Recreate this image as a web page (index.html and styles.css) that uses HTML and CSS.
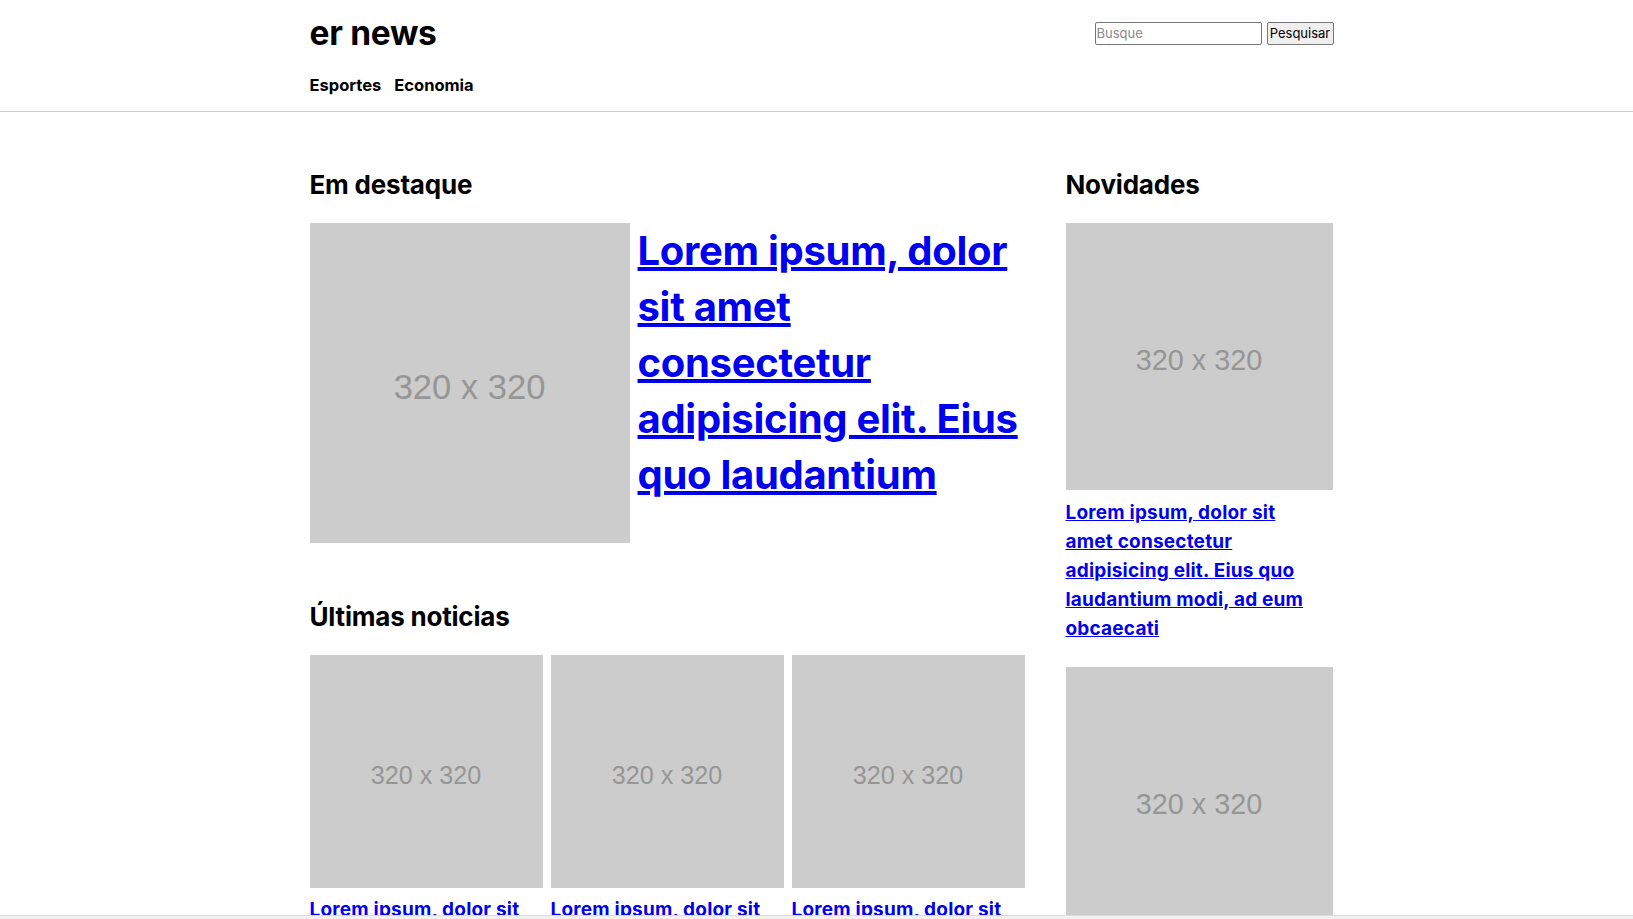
FILE: index.html
```html
<!DOCTYPE html>
<html lang="pt-BR">
<head>
<meta charset="utf-8">
<title>er news</title>
<link rel="stylesheet" href="styles.css">
</head>
<body>
<header class="site-header">
  <div class="container">
    <div class="header-top">
      <div class="logo">er news</div>
      <form class="search">
        <input class="search-input" type="text" placeholder="Busque">
        <button class="search-button" type="button">Pesquisar</button>
      </form>
    </div>
    <nav class="nav">
      <a class="nav-link" href="#">Esportes</a>
      <a class="nav-link" href="#">Economia</a>
    </nav>
  </div>
</header>
<main class="container layout">
  <div class="main-col">
    <section class="section">
      <h2 class="section-title">Em destaque</h2>
      <div class="featured">
        <div class="ph ph-featured"><span>320 x 320</span></div>
        <a class="featured-link" href="#">Lorem ipsum, dolor sit amet consectetur adipisicing elit. Eius quo laudantium</a>
      </div>
    </section>
    <section class="section section-latest">
      <h2 class="section-title">Últimas noticias</h2>
      <div class="latest-grid">
        <article class="card">
          <div class="ph"><span>320 x 320</span></div>
          <a class="small" href="#">Lorem ipsum, dolor sit amet consectetur adipisicing elit. Eius quo laudantium</a>
        </article>
        <article class="card">
          <div class="ph"><span>320 x 320</span></div>
          <a class="small" href="#">Lorem ipsum, dolor sit amet consectetur adipisicing elit. Eius quo laudantium</a>
        </article>
        <article class="card">
          <div class="ph"><span>320 x 320</span></div>
          <a class="small" href="#">Lorem ipsum, dolor sit amet consectetur adipisicing elit. Eius quo laudantium</a>
        </article>
      </div>
    </section>
  </div>
  <aside class="side-col">
    <section class="section">
      <h2 class="section-title">Novidades</h2>
      <div class="side-list">
        <article class="side-card">
          <div class="ph"><span>320 x 320</span></div>
          <a class="small side-link" href="#">Lorem ipsum, dolor sit amet consectetur adipisicing elit. Eius quo laudantium modi, ad eum obcaecati</a>
        </article>
        <article class="side-card">
          <div class="ph"><span>320 x 320</span></div>
          <a class="small side-link" href="#">Lorem ipsum, dolor sit amet consectetur adipisicing elit. Eius quo laudantium modi, ad eum obcaecati</a>
        </article>
      </div>
    </section>
  </aside>
</main>
<div class="bottom-bar"></div>
</body>
</html>
```

FILE: styles.css
```css
* { box-sizing: border-box; }

html, body {
  margin: 0;
  background: #ffffff;
}

body {
  padding-left: 10px;
  font-family: "Inter", "Noto Sans", sans-serif;
  color: #000;
}

.container {
  width: 1024px;
  margin: 0 auto;
}

.site-header {
  border-bottom: 1px solid #cccccc;
  margin-left: -10px;
  padding: 9px 0 14px 10px;
}

.header-top {
  display: flex;
  justify-content: space-between;
  align-items: center;
  height: 48px;
}

.logo {
  font-size: 33.5px;
  font-weight: 700;
  line-height: 48px;
  letter-spacing: -0.3px;
}

.search {
  display: flex;
  align-items: center;
  gap: 5px;
  margin: 0;
}

.search-input {
  width: 167px;
  height: 23px;
  font-family: "Inter", sans-serif;
  font-size: 13px;
  padding: 1px 1px;
  border: 1px solid #767676;
  border-radius: 2px;
}

.search-input::placeholder { color: #8a8a8a; }

.search-button {
  width: 67px;
  height: 23px;
  font-family: "Inter", sans-serif;
  font-size: 13px;
  padding: 0;
  background: #efefef;
  border: 1px solid #767676;
  border-radius: 2px;
  color: #000;
}

.nav {
  display: flex;
  gap: 13px;
  margin-top: 16px;
  line-height: 24px;
}

.nav-link {
  color: #000;
  text-decoration: none;
  font-weight: 700;
  font-size: 16.5px;
}

.layout {
  display: grid;
  grid-template-columns: 715px 268px;
  column-gap: 41px;
  padding-top: 55px;
}

.section-title {
  margin: 0 0 20px;
  font-size: 26px;
  line-height: 36px;
  font-weight: 700;
  letter-spacing: -0.2px;
}

.section-latest { margin-top: 56px; }

.ph {
  container-type: inline-size;
  aspect-ratio: 1 / 1;
  background: #cccccc;
  display: flex;
  align-items: center;
  justify-content: center;
  flex-shrink: 0;
  padding-top: 8px;
}

.ph span {
  font-family: "Liberation Sans", Arial, sans-serif;
  color: #969696;
  font-size: 10.8cqw;
  line-height: 1;
}

.featured {
  display: flex;
  align-items: flex-start;
  gap: 8px;
}

.ph-featured { width: 320px; }

.featured-link {
  font-size: 40px;
  line-height: 56px;
  font-weight: 700;
  color: #0000ee;
  letter-spacing: -0.3px;
}

.latest-grid {
  display: grid;
  grid-template-columns: repeat(3, 1fr);
  gap: 8px;
}

.card {
  display: flex;
  flex-direction: column;
  gap: 7px;
}

.small {
  font-size: 19px;
  line-height: 29px;
  font-weight: 700;
  color: #0000ee;
  letter-spacing: 0.2px;
}

.side-list {
  display: flex;
  flex-direction: column;
  gap: 24px;
}

.side-card {
  display: flex;
  flex-direction: column;
  gap: 8px;
}

.side-card .ph { width: 267px; }

.side-link { max-width: 256px; }

.bottom-bar {
  position: fixed;
  left: 0;
  right: 0;
  bottom: 0;
  height: 4px;
  background: #f1f1f1;
  border-top: 1px solid #dcdcdc;
}
```
